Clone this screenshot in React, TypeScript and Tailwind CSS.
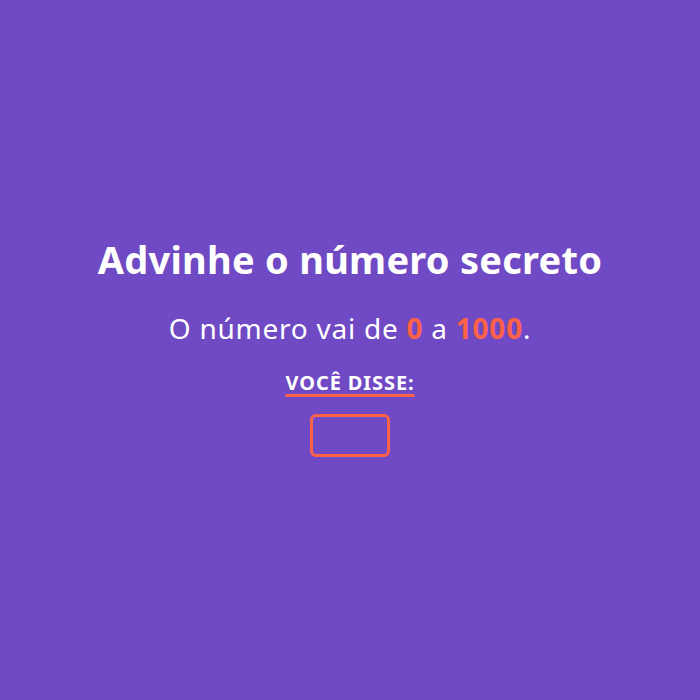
import React from "react";

export default function App() {
  return (
    <div
      className="w-full h-[700px] bg-[#7049c4] flex flex-col items-center justify-center text-white"
      style={{ fontFamily: '"Noto Sans", "Open Sans", sans-serif' }}
    >
      <h1 className="text-[38px] font-bold leading-none tracking-[0.25px] mt-[-4px]">Advinhe o número secreto</h1>
      <p className="text-[28px] leading-none mt-[36px] tracking-[0.75px]">
        O número vai de <span className="text-[#ff6248] font-bold">0</span> a{" "}
        <span className="text-[#ff6248] font-bold">1000</span>.
      </p>
      <div className="mt-[31px] text-[20px] font-bold leading-none tracking-[0.9px] underline decoration-[#ff6248] decoration-[3px] underline-offset-[4px]">
        VOCÊ DISSE:
      </div>
      <div className="mt-[21px] w-[80px] h-[43px] border-[3px] border-[#ff6248] rounded-[6px]"></div>
    </div>
  );
}
